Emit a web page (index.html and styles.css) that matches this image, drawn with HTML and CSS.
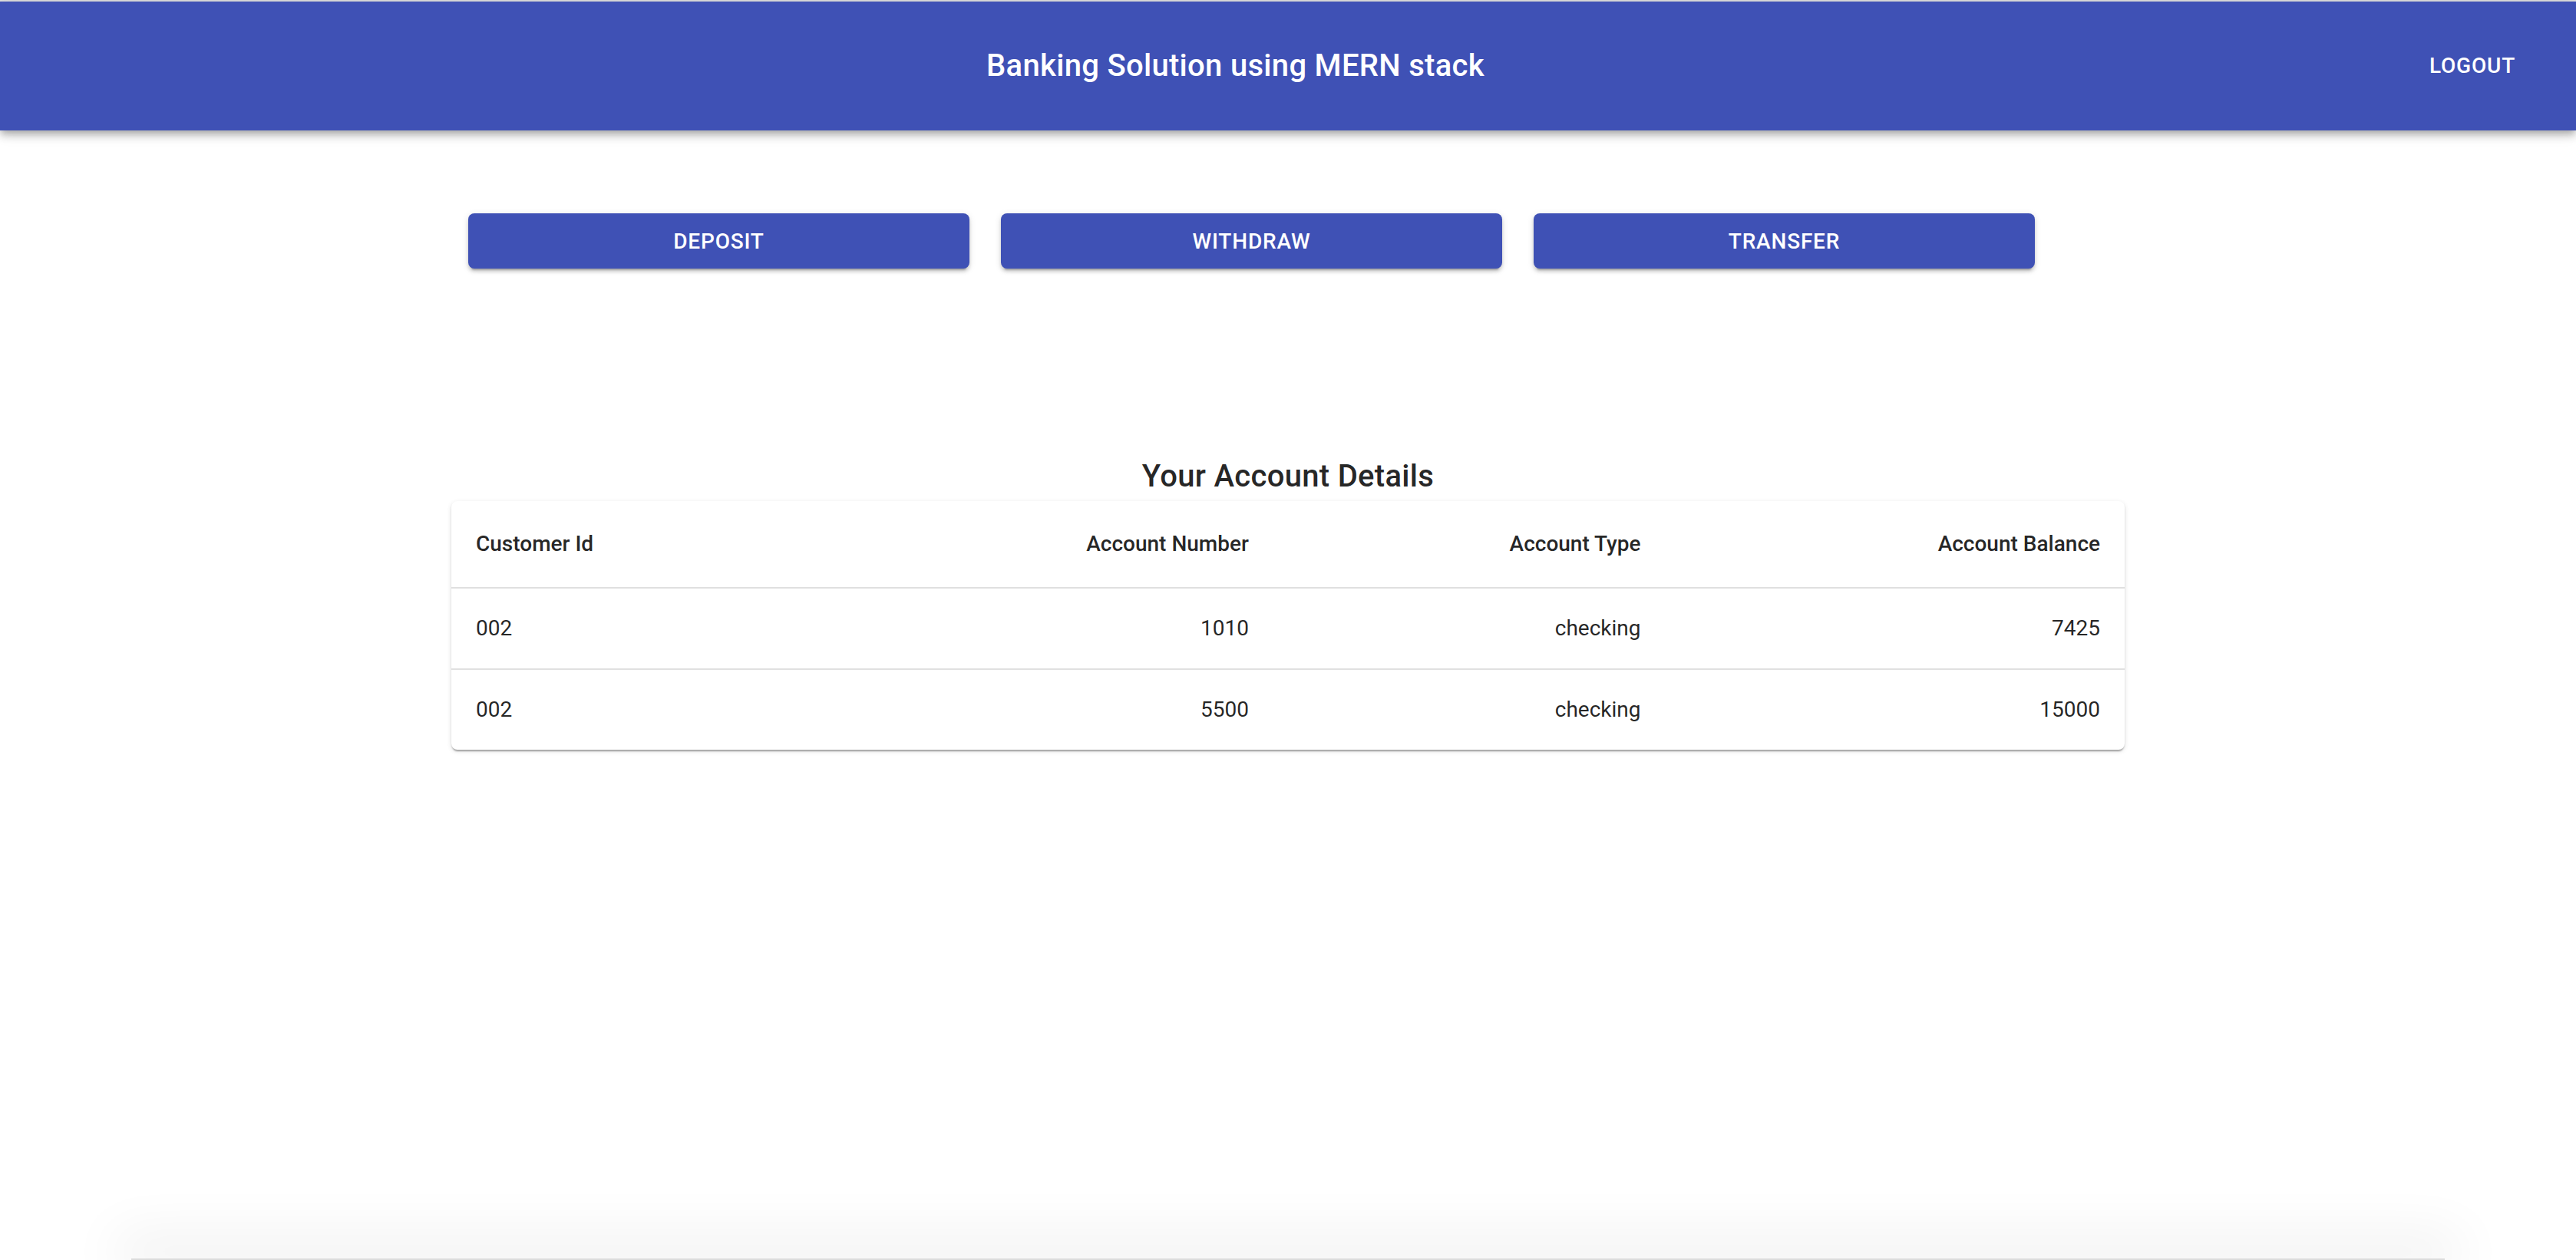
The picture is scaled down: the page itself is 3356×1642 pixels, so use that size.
FILE: index.html
```html
<!DOCTYPE html>
<html lang="en">
<head>
<meta charset="utf-8">
<title>Banking Solution using MERN stack</title>
<link rel="stylesheet" href="styles.css">
</head>
<body>
<div class="page">
  <header class="appbar">
    <h1 class="appbar-title">Banking Solution using MERN stack</h1>
    <button class="logout">Logout</button>
  </header>

  <main class="content">
    <div class="actions">
      <button class="action-btn">Deposit</button>
      <button class="action-btn">Withdraw</button>
      <button class="action-btn">Transfer</button>
    </div>

    <h2 class="section-title">Your Account Details</h2>
    <div class="table-paper">
      <table class="accounts">
        <thead>
          <tr>
            <th class="left">Customer Id</th>
            <th>Account Number</th>
            <th>Account Type</th>
            <th>Account Balance</th>
          </tr>
        </thead>
        <tbody>
          <tr>
            <td class="left">002</td>
            <td>1010</td>
            <td>checking</td>
            <td>7425</td>
          </tr>
          <tr>
            <td class="left">002</td>
            <td>5500</td>
            <td>checking</td>
            <td>15000</td>
          </tr>
        </tbody>
      </table>
    </div>
  </main>

  <div class="bottom-sheet"></div>
</div>
</body>
</html>
```

FILE: styles.css
```css
html, body {
  margin: 0;
  padding: 0;
  background: #ffffff;
  overflow: hidden;
}

body {
  font-family: Roboto, "Liberation Sans", Arial, sans-serif;
  color: rgba(0, 0, 0, 0.87);
}

.page {
  border-top: 2px solid #e2e2e2;
  height: 1640px;
  display: flex;
  flex-direction: column;
}

.appbar {
  height: 168px;
  background: #3f51b5;
  color: #ffffff;
  display: flex;
  align-items: center;
  padding: 0 63px 0 48px;
  box-shadow: 0 4px 8px -2px rgba(0,0,0,0.2), 0 8px 10px 0 rgba(0,0,0,0.14), 0 2px 20px 0 rgba(0,0,0,0.12);
  position: relative;
  z-index: 2;
  flex-shrink: 0;
}

.appbar-title {
  flex: 1;
  margin: 0;
  text-align: center;
  font-size: 40px;
  font-weight: 500;
  line-height: 64px;
  letter-spacing: 0.3px;
  padding-left: 22px;
}

.logout {
  background: transparent;
  border: 0;
  color: #ffffff;
  font-family: inherit;
  font-size: 28px;
  font-weight: 500;
  text-transform: uppercase;
  letter-spacing: 0.8px;
  padding: 12px 16px;
  line-height: 48px;
  cursor: pointer;
}

.content {
  display: flex;
  flex-direction: column;
  align-items: center;
}

.actions {
  width: 2180px;
  box-sizing: border-box;
  padding-left: 22px;
  margin-top: 108px;
  display: flex;
  gap: 41px;
}

.action-btn {
  width: 653px;
  height: 72px;
  background: #3f51b5;
  color: #ffffff;
  border: 0;
  border-radius: 8px;
  font-family: inherit;
  font-size: 28px;
  font-weight: 500;
  letter-spacing: 0.8px;
  text-transform: uppercase;
  box-shadow: 0 6px 2px -4px rgba(0,0,0,0.2), 0 4px 4px 0 rgba(0,0,0,0.14), 0 2px 10px 0 rgba(0,0,0,0.12);
  cursor: pointer;
}

.section-title {
  margin: 239px 0 0;
  font-size: 40px;
  font-weight: 500;
  line-height: 64px;
  letter-spacing: 0.3px;
  color: rgba(0, 0, 0, 0.87);
}

.table-paper {
  width: 2180px;
  border-radius: 8px;
  background: #ffffff;
  box-shadow: 0 4px 2px -2px rgba(0,0,0,0.2), 0 2px 2px 0 rgba(0,0,0,0.14), 0 2px 6px 0 rgba(0,0,0,0.12);
  overflow: hidden;
}

.accounts {
  width: 100%;
  border-collapse: collapse;
  font-size: 28px;
}

.accounts th,
.accounts td {
  padding: 32px;
  text-align: right;
  border-bottom: 2px solid #e0e0e0;
  color: rgba(0, 0, 0, 0.87);
}

.accounts th {
  font-weight: 500;
  line-height: 48px;
}

.accounts td {
  font-weight: 400;
  line-height: 40px;
}

.accounts tbody tr:last-child td {
  border-bottom: 0;
}

.accounts .left {
  text-align: left;
}

.bottom-sheet {
  margin: auto 171px 0;
  height: 2px;
  flex-shrink: 0;
  background: #dcdcdc;
  box-shadow: 0 -10px 70px 20px rgba(0,0,0,0.07);
}
```
